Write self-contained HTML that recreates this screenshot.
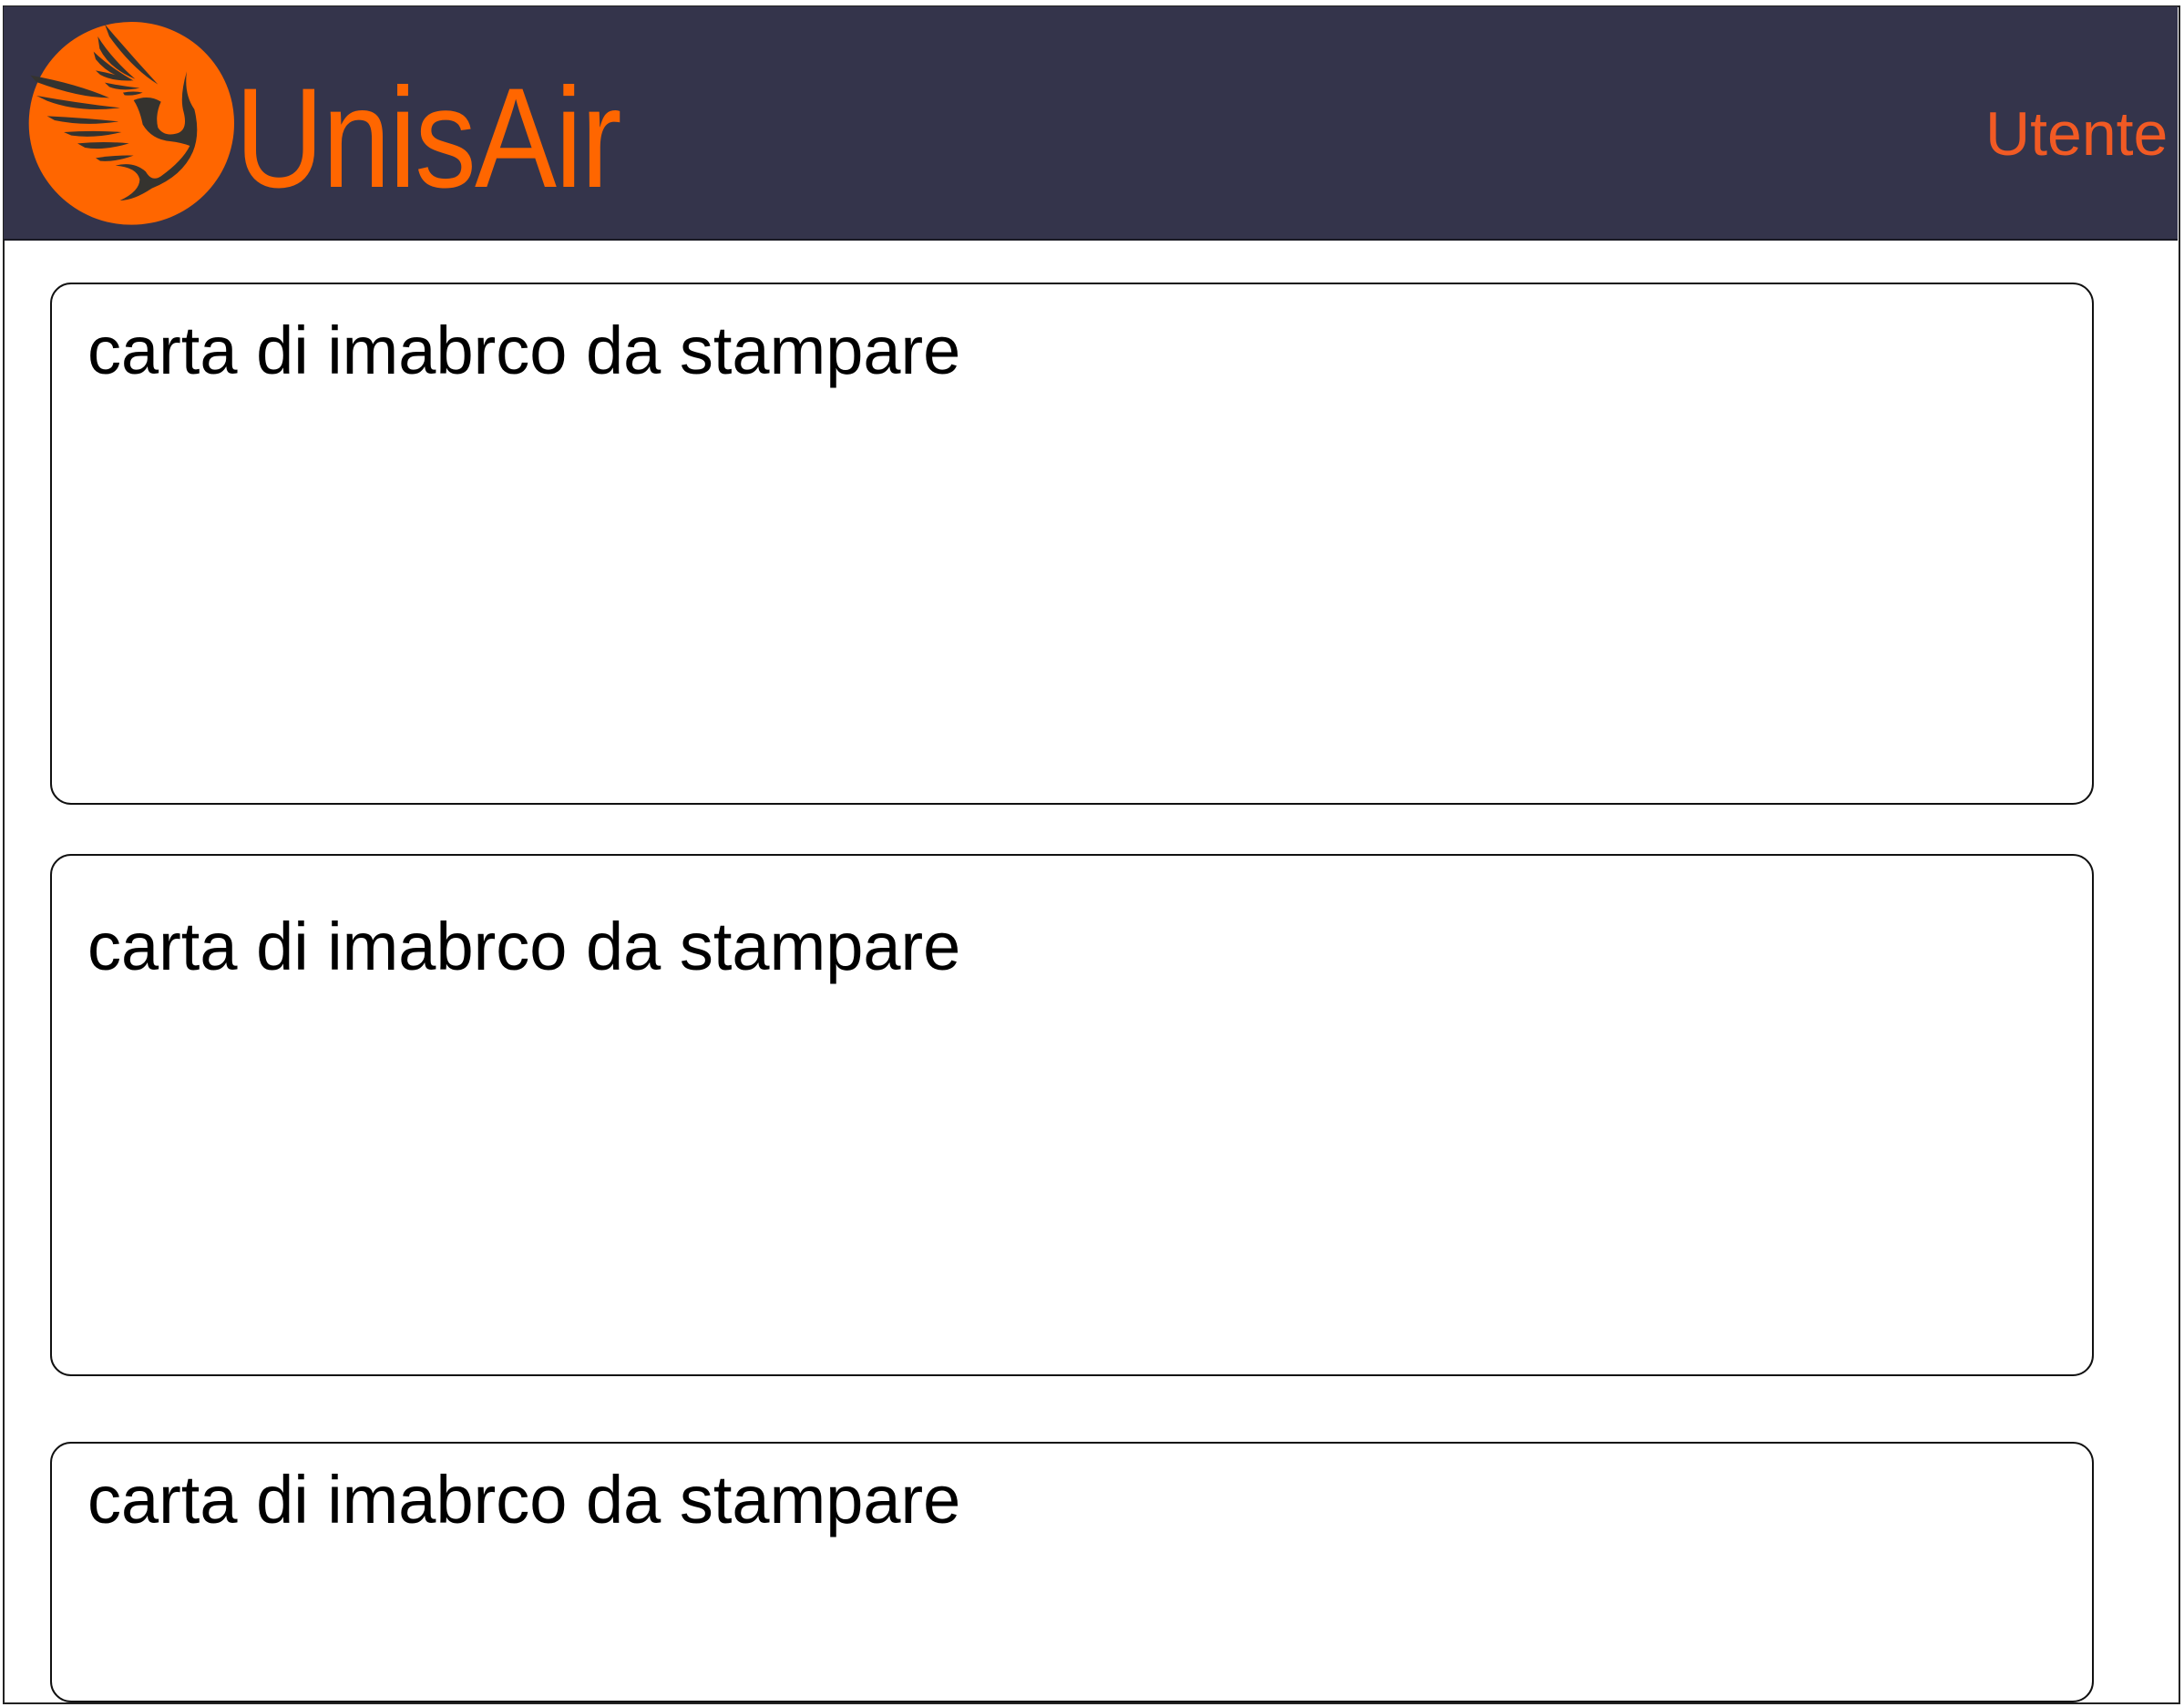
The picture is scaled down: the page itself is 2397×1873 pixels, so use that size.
<!DOCTYPE html>
<html><head><meta charset="utf-8"><style>
html,body{margin:0;padding:0;background:#fff;}
body{width:2397px;height:1873px;position:relative;overflow:hidden;font-family:"Liberation Sans",sans-serif;}
.frame{position:absolute;left:3px;top:6px;width:2386px;height:1860px;border:2px solid #222;box-sizing:content-box;}
.hdr{position:absolute;left:4px;top:7px;width:2386px;height:255px;background:#34344b;border-bottom:2px solid #1a1a24;}
.logo{position:absolute;left:20px;top:20px;width:250px;height:235px;}
.brand{position:absolute;left:258px;top:152px;font-size:156px;color:#ff6600;line-height:0;letter-spacing:-2px;transform:scaleX(0.865);transform-origin:0 0;}
.user{position:absolute;left:2179px;top:147px;font-size:68px;color:#f15a24;line-height:0;}
.card{position:absolute;left:55px;width:2243px;border:2px solid #111;border-radius:23px;box-sizing:border-box;}
.card span{position:absolute;left:39px;font-size:74px;color:#000;line-height:0;}
</style></head><body>
<div class="frame"></div>
<div class="hdr"></div>
<svg class="logo" viewBox="0 0 750 705" xmlns="http://www.w3.org/2000/svg">
<ellipse cx="373" cy="346" rx="338" ry="334" fill="#ff6600"/>
<g fill="#35332f">
<path d="M40,188 Q190,215 300,262 Q200,262 60,210Z"/>
<path d="M60,255 Q200,280 335,295 Q200,312 95,272Z"/>
<path d="M95,322 Q220,328 330,340 Q220,357 120,336Z"/>
<path d="M150,375 Q250,368 340,375 Q250,397 175,386Z"/>
<path d="M195,412 Q280,404 365,412 Q280,437 220,426Z"/>
<path d="M255,460 Q320,450 380,452 Q320,474 270,470Z"/>
<path d="M285,20 Q370,120 460,218 Q375,165 300,60Z"/>
<path d="M262,60 Q305,130 385,200 Q300,165 268,100Z"/>
<path d="M248,110 Q300,160 380,206 Q300,192 255,135Z"/>
<path d="M255,172 Q320,183 375,205 Q310,208 270,186Z"/>
<path d="M285,212 Q340,223 400,230 Q340,242 300,226Z"/>
<path d="M345,245 Q380,238 410,245 Q380,257 350,253Z"/>
<path d="M380,270 Q430,250 470,275 Q450,320 460,360 Q480,390 520,380 Q560,370 545,310 Q530,260 555,175 Q545,250 580,300 Q600,380 575,440 Q540,520 440,560 Q380,600 335,600 Q400,570 400,530 Q390,490 320,485 Q380,470 420,505 Q440,540 470,520 Q540,470 565,420 Q540,410 500,405 Q440,400 410,350 Q400,300 380,270Z"/>
</g>
</svg>
<div class="brand">UnisAir</div>
<div class="user">Utente</div>
<div class="card" style="top:310px;height:573px"><span style="top:73px">carta di imabrco da stampare</span></div>
<div class="card" style="top:937px;height:573px"><span style="top:100px">carta di imabrco da stampare</span></div>
<div class="card" style="top:1582px;height:286px"><span style="top:62px">carta di imabrco da stampare</span></div>
</body></html>
